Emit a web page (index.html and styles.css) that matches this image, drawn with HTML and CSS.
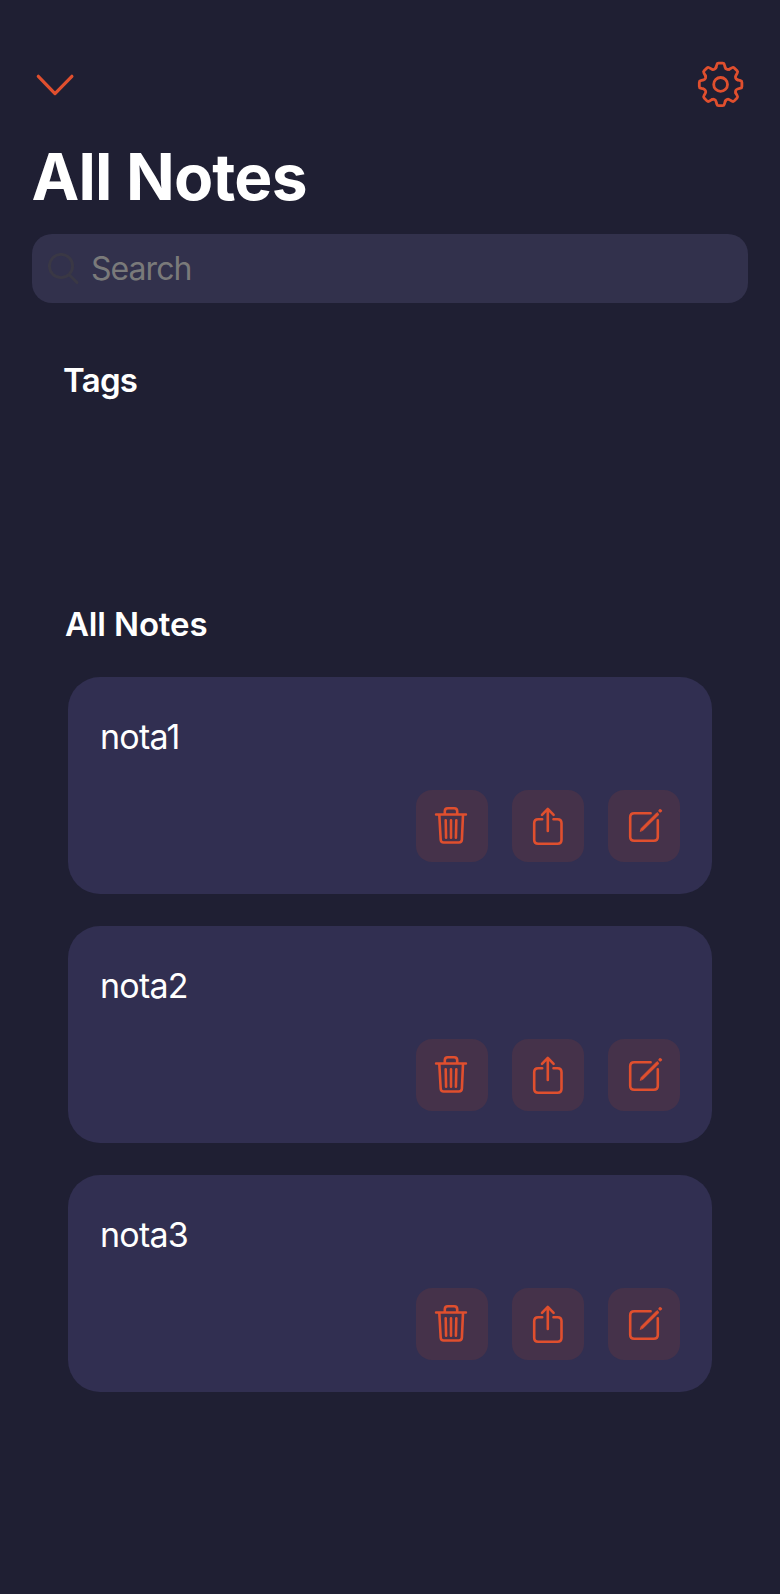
FILE: index.html
```html
<!DOCTYPE html>
<html lang="en">
<head>
<meta charset="utf-8">
<title>All Notes</title>
<link rel="stylesheet" href="styles.css">
</head>
<body>
<svg class="defs" width="0" height="0" aria-hidden="true">
  <symbol id="trash" viewBox="0 0 72 72">
    <path d="M20.1 24.5H49.9M28.8 24V21.2Q28.8 18.2 31.8 18.2H38.2Q41.2 18.2 41.2 21.2V24M23.3 25L24.7 49.7Q24.9 52.5 27.7 52.5H42.9Q45.7 52.5 45.9 49.7L47 25M29.7 30.2L30.1 47.8M35 30.2V47.8M40.3 30.2L39.9 47.8"/>
  </symbol>
  <symbol id="share" viewBox="0 0 72 72">
    <path d="M30.2 29.2H26.2Q22.2 29.2 22.2 33.2V49.8Q22.2 53.8 26.2 53.8H45.5Q49.5 53.8 49.5 49.8V33.2Q49.5 29.2 45.5 29.2H41.5M35.8 41V19M30 24.8L35.8 18.9L41.6 24.8"/>
  </symbol>
  <symbol id="edit" viewBox="0 0 72 72">
    <path d="M42.6 23.2H26.2Q22.2 23.2 22.2 27.2V46.8Q22.2 50.8 26.2 50.8H45.8Q49.8 50.8 49.8 46.8V30.4"/>
    <path class="solid" d="M32.3 41.1L33.3 38.3L49.1 22.5L51 24.4L35.2 40.1Z"/>
    <circle class="solid" cx="52.2" cy="20.8" r="1.4"/>
  </symbol>
  <path id="tooth" d="M-4.6-16.9L-3.7-20Q-3.4-21.3-2-21.3H2Q3.4-21.3 3.7-20L4.6-16.9C5.1-15.2 7.1-14.4 8.7-15.2"/>
</svg>
<main class="screen">
  <header class="topbar">
    <svg class="chevron" viewBox="0 0 40 24"><path d="M3.3 3.3L20 20.6L36.9 3.3"/></svg>
    <svg class="gear" viewBox="-22.6 -23.4 46 46">
      <use href="#tooth"/><use href="#tooth" transform="rotate(45)"/><use href="#tooth" transform="rotate(90)"/><use href="#tooth" transform="rotate(135)"/><use href="#tooth" transform="rotate(180)"/><use href="#tooth" transform="rotate(225)"/><use href="#tooth" transform="rotate(270)"/><use href="#tooth" transform="rotate(315)"/>
      <circle r="6.9"/>
    </svg>
  </header>
  <h1 class="title">All Notes</h1>
  <div class="search">
    <svg class="lens" viewBox="0 0 32 32"><circle cx="13" cy="13" r="11.6"/><path d="M21.5 22L29 29.5"/></svg>
    <span class="placeholder">Search</span>
  </div>
  <section class="tags"><h2 class="heading heading-tags">Tags</h2></section>
  <section class="notes">
    <h2 class="heading heading-notes">All Notes</h2>
    <article class="card">
      <p class="name">nota1</p>
      <div class="actions"><svg class="btn"><use href="#trash"/></svg><svg class="btn"><use href="#share"/></svg><svg class="btn"><use href="#edit"/></svg></div>
    </article>
    <article class="card">
      <p class="name">nota2</p>
      <div class="actions"><svg class="btn"><use href="#trash"/></svg><svg class="btn"><use href="#share"/></svg><svg class="btn"><use href="#edit"/></svg></div>
    </article>
    <article class="card">
      <p class="name">nota3</p>
      <div class="actions"><svg class="btn"><use href="#trash"/></svg><svg class="btn"><use href="#share"/></svg><svg class="btn"><use href="#edit"/></svg></div>
    </article>
  </section>
</main>
</body>
</html>
```
FILE: styles.css
```css
* { box-sizing: border-box; margin: 0; padding: 0; }
body { background: #1f1f33; color: #fff; font-family: Inter, "Liberation Sans", sans-serif; }
svg { display: block; fill: none; stroke: #e04f2e; stroke-width: 2.6; stroke-linecap: round; stroke-linejoin: round; }
.defs { height: 0; }
.screen { width: 780px; height: 1594px; padding: 61px 32px 0; display: flex; flex-direction: column; }
.topbar { display: flex; justify-content: space-between; height: 47px; padding: 0 4px 0 3px; }
.chevron { width: 40px; height: 24px; margin-top: 12px; stroke-width: 3.2; }
.gear { width: 46px; height: 46px; stroke-width: 2.8; overflow: visible; }
.title { margin-top: 29px; margin-left: -0.5px; height: 80px; line-height: 80px; font-size: 64px; font-weight: 700; letter-spacing: -0.8px; }
.search { margin-top: 17px; height: 69px; border-radius: 20px; background: #32314c; display: flex; align-items: center; padding-left: 16px; }
.lens { width: 32px; height: 32px; stroke: #3a3845; stroke-width: 2.9; }
.placeholder { margin-left: 11px; font-size: 32px; letter-spacing: -0.95px; color: #7a7a7a; }
.tags { height: 242px; padding: 55px 31px 0; }
.notes { display: flex; flex-direction: column; gap: 32px; padding: 57px 36px 0; }
.heading { font-size: 33px; line-height: 44px; font-weight: 600; }
.heading-tags { letter-spacing: -0.7px; }
.heading-notes { margin: 0 0 -1px -3px; letter-spacing: -0.15px; }
.card { height: 217px; border-radius: 32px; background: #312f51; padding: 38px 32px 32px; display: flex; flex-direction: column; justify-content: space-between; }
.name { font-size: 34px; line-height: 44px; letter-spacing: -0.75px; }
.actions { display: flex; justify-content: flex-end; gap: 24px; }
.btn { width: 72px; height: 72px; border-radius: 16px; background: #45324a; }
.solid { fill: #e04f2e; stroke-width: 0.8; }
```
